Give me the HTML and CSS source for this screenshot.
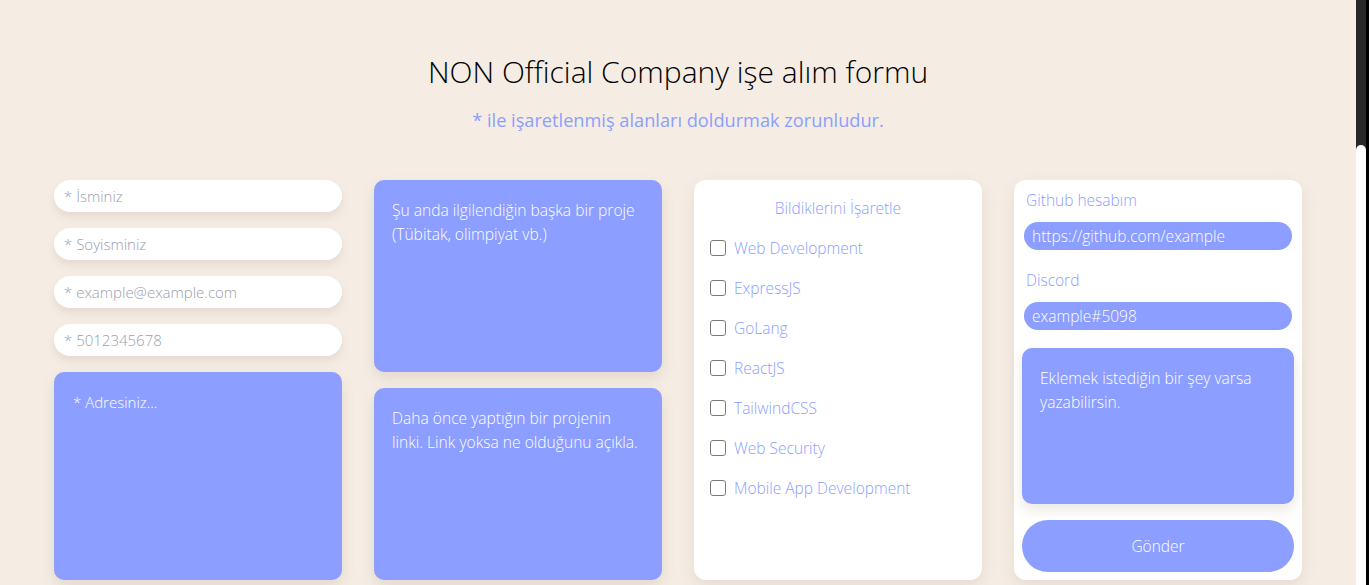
FILE: index.html
```html
<!DOCTYPE html>
<html lang="tr">
<head>
<meta charset="utf-8">
<title>NON Official Company işe alım formu</title>
<link rel="stylesheet" href="styles.css">
</head>
<body>
<div class="shell">
  <main class="page">
    <header class="head">
      <h1 class="title">NON Official Company işe alım formu</h1>
      <p class="subtitle">* ile işaretlenmiş alanları doldurmak zorunludur.</p>
    </header>
    <form class="grid">
      <div class="col">
        <input class="pill" type="text" placeholder="* İsminiz">
        <input class="pill" type="text" placeholder="* Soyisminiz">
        <input class="pill" type="email" placeholder="* example@example.com">
        <input class="pill" type="tel" placeholder="* 5012345678">
        <textarea class="area area-addr" placeholder="* Adresiniz..."></textarea>
      </div>
      <div class="col">
        <textarea class="area area-half" placeholder="Şu anda ilgilendiğin başka bir proje (Tübitak, olimpiyat vb.)"></textarea>
        <textarea class="area area-half" placeholder="Daha önce yaptığın bir projenin linki. Link yoksa ne olduğunu açıkla."></textarea>
      </div>
      <div class="card skills">
        <p class="skills-title">Bildiklerini İşaretle</p>
        <label class="check"><span class="box"></span>Web Development</label>
        <label class="check"><span class="box"></span>ExpressJS</label>
        <label class="check"><span class="box"></span>GoLang</label>
        <label class="check"><span class="box"></span>ReactJS</label>
        <label class="check"><span class="box"></span>TailwindCSS</label>
        <label class="check"><span class="box"></span>Web Security</label>
        <label class="check"><span class="box"></span>Mobile App Development</label>
      </div>
      <div class="card extra">
        <p class="field-label">Github hesabım</p>
        <div class="blue-pill">https://github.com/example</div>
        <p class="field-label label-discord">Discord</p>
        <div class="blue-pill">example#5098</div>
        <textarea class="area area-note" placeholder="Eklemek istediğin bir şey varsa yazabilirsin."></textarea>
        <button class="send" type="button">Gönder</button>
      </div>
    </form>
  </main>
  <div class="scrollbar" aria-hidden="true">
    <div class="scroll-track"><div class="scroll-thumb"></div></div>
    <div class="scroll-edge"></div>
  </div>
</div>
</body>
</html>
```

FILE: styles.css
```css
* { box-sizing: border-box; }
html, body { margin: 0; height: 585px; overflow: hidden; }
body {
  background: #f5ede4;
  font-family: "Open Sans", "Noto Sans", sans-serif;
  font-weight: 300;
  color: #000;
}
.shell { display: flex; height: 585px; }
.page { flex: 1; min-width: 0; }
.head { text-align: center; padding-top: 52px; }
.title {
  margin: 0;
  font-size: 30px;
  font-weight: 300;
  line-height: 40px;
  color: #000;
}
.subtitle {
  margin: 16px 0 0;
  font-size: 18.2px;
  line-height: 24px;
  color: #8c9eff;
  font-weight: 400;
}
.grid {
  display: grid;
  grid-template-columns: repeat(4, 288px);
  gap: 32px;
  justify-content: center;
  margin-top: 48px;
}
.col { display: flex; flex-direction: column; gap: 16px; }
.pill {
  height: 32px;
  border: none;
  border-radius: 16px;
  background: #fff;
  padding: 0 10px;
  font: 300 15px "Open Sans", sans-serif;
  color: #333;
  box-shadow: 0 5px 10px rgba(120, 90, 60, 0.12);
  outline: none;
}
.pill::placeholder { color: #9aa0b0; }
.area {
  border: none;
  resize: none;
  background: #8c9eff;
  border-radius: 10px;
  color: #fff;
  font: 300 15.6px/24px "Open Sans", sans-serif;
  padding: 18px;
  box-shadow: 0 6px 14px rgba(120, 90, 60, 0.14);
  outline: none;
}
.area::placeholder { color: #fff; opacity: 1; }
.area-addr { height: 208px; padding: 18px 19px; font-size: 15px; }
.area-half { height: 192px; padding: 18px; }
.card {
  background: #fff;
  border-radius: 12px;
  height: 400px;
  box-shadow: 0 6px 16px rgba(120, 90, 60, 0.12);
}
.skills { padding: 18px 16px 0; }
.skills-title {
  margin: 0 0 10px;
  text-align: center;
  color: #8c9eff;
  font-size: 15.5px;
  line-height: 20px;
  font-weight: 300;
}
.check {
  display: flex;
  align-items: center;
  gap: 8px;
  height: 40px;
  color: #8c9eff;
  font-size: 15.5px;
  font-weight: 300;
}
.box {
  width: 16px;
  height: 16px;
  border: 1.5px solid #7a7a7a;
  border-radius: 3px;
  flex: none;
}
.extra { padding: 10px 8px 8px; display: flex; flex-direction: column; }
.field-label {
  margin: 0 0 12px 4px;
  color: #8c9eff;
  font-size: 15.5px;
  line-height: 20px;
  font-weight: 300;
}
.label-discord { margin-top: 20px; }
.blue-pill {
  margin: 0 2px;
  height: 28px;
  border-radius: 14px;
  background: #8c9eff;
  color: #fff;
  font-size: 15.5px;
  line-height: 28px;
  padding: 0 8px;
  font-weight: 300;
}
.area-note { height: 156px; margin-top: 18px; padding: 18px; }
.send {
  margin-top: 16px;
  height: 52px;
  border: none;
  border-radius: 26px;
  background: #8c9eff;
  color: #fff;
  font: 300 15.5px "Open Sans", sans-serif;
}
.scrollbar { width: 13px; flex: none; display: flex; height: 585px; }
.scroll-track { width: 10px; background: #282828; display: flex; flex-direction: column; justify-content: flex-end; }
.scroll-thumb { height: 440px; background: #fff; border-radius: 5px 5px 0 0; }
.scroll-edge { flex: 1; background: #000; }
```
